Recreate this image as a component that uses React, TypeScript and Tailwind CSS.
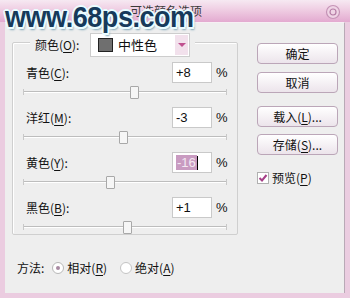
import React from 'react'

const cjk = "font-['Noto_Sans_CJK_SC','Noto_Sans',sans-serif]"

function Mn({ c }: { c: string }) {
  return <span className="underline underline-offset-2">{c}</span>
}

function Slider({ pos, last }: { pos: number; last?: boolean }) {
  return (
    <div className={`relative ml-[10px] w-[204px] ${last ? 'h-[16px]' : 'h-[24px]'}`}>
      <div className="absolute left-0 right-0 top-[8px] h-[2px] border-t border-[#bdbdbd] border-b-white border-b" />
      <div className="absolute left-0 top-[6px] h-[6px] w-[1px] bg-[#c8c8c8]" />
      <div className="absolute right-0 top-[6px] h-[6px] w-[1px] bg-[#c8c8c8]" />
      <div
        className="absolute top-[3px] h-[13px] w-[9px] border border-[#a8a8a8] bg-[#f6f6f6] rounded-[1px]"
        style={{ left: pos - 4 }}
      />
    </div>
  )
}

function Row({ label, m, value, selected }: { label: string; m: string; value: string; selected?: boolean }) {
  return (
    <div className="flex items-center h-[21px] pl-[13px]">
      <span className="w-[146px]">
        {label}(<Mn c={m} />):
      </span>
      <div className="w-[40px] h-[21px] bg-white border border-[#c9c9c9] flex items-center pl-[3px] font-['Liberation_Sans',sans-serif] text-[13px]">
        {selected ? (
          <>
            <span className="bg-[#c99bc1] text-[#f4e8f2] px-[1px] leading-[15px]">{value}</span>
            <span className="w-[1px] h-[14px] bg-black" />
          </>
        ) : (
          value
        )}
      </div>
      <span className="ml-[4px] font-['Liberation_Sans',sans-serif] text-[13px]">%</span>
    </div>
  )
}

function Btn({ children, mt }: { children: React.ReactNode; mt: string }) {
  return (
    <div
      className={`${mt} h-[21px] w-[81px] rounded-[4px] border border-[#bba6b8] bg-gradient-to-b from-white to-[#ece4eb] flex items-center justify-center`}
    >
      {children}
    </div>
  )
}

export default function App() {
  return (
    <div className={`relative w-[350px] h-[298px] overflow-hidden bg-[#ebcce0] flex flex-col text-[12px] text-[#111] ${cjk}`}>
      {/* title bar */}
      <div className="relative h-[22px] shrink-0 flex items-center bg-gradient-to-b from-[#f6e9f2] via-[#eecae1] to-[#e3aad0]">
        <span className="ml-[130px] text-[12px] text-[#3a3a3a]">可选颜色选项</span>
        <svg className="absolute left-[325px] top-[4px]" width="16" height="16" viewBox="0 0 16 16">
          <circle cx="8" cy="8" r="6.5" fill="#efd3e5" stroke="#c493b6" strokeWidth="1.2" />
          <circle cx="8" cy="8" r="3" fill="none" stroke="#b57ea6" strokeWidth="1.2" />
        </svg>
      </div>

      {/* body */}
      <div className="flex-1 mx-[5px] mb-[5px] bg-[#eeeeee] border-t border-[#f6f0f4] border-r border-r-[#b9a9b6] flex">
        <div className="pl-[7px] flex flex-col">
          <div className="mt-[19px] w-[226px] border border-[#cfcfcf] rounded-[2px] shadow-[inset_1px_1px_0_#fff] flex flex-col">
            <div className="-mt-[10px] ml-[17px] px-[5px] w-fit h-[24px] bg-[#eeeeee] flex items-center">
              <span className="w-[55px]">
                颜色(<Mn c="O" />):
              </span>
              <div className="w-[100px] h-[24px] bg-white border border-[#cdcdcd] flex items-center">
                <div className="ml-[7px] w-[15px] h-[14px] bg-[#6f6f6f] border border-[#222]" />
                <span className="ml-[5px] text-[13px]">中性色</span>
                <div className="ml-auto mr-[1px] w-[13px] h-[20px] bg-[#f2e1ec] flex items-center justify-center">
                  <div className="w-0 h-0 border-l-[4px] border-r-[4px] border-t-[4px] border-l-transparent border-r-transparent border-t-[#c0508f]" />
                </div>
              </div>
            </div>
            <div className="mt-[5px]">
              <Row label="青色" m="C" value="+8" />
              <Slider pos={111} />
              <Row label="洋红" m="M" value="-3" />
              <Slider pos={100} />
              <Row label="黄色" m="Y" value="-16" selected />
              <Slider pos={87} />
              <Row label="黑色" m="B" value="+1" />
              <Slider pos={104} last />
            </div>
          </div>

          <div className="mt-[24px] pl-[5px] h-[18px] flex items-center">
            <span>方法:</span>
            <div className="ml-[8px] w-[12px] h-[12px] rounded-full border border-[#b8b8b8] bg-white flex items-center justify-center">
              <div className="w-[4px] h-[4px] rounded-full bg-[#a88aa2]" />
            </div>
            <span className="ml-[3px]">
              相对(<Mn c="R" />)
            </span>
            <div className="ml-[13px] w-[12px] h-[12px] rounded-full border border-[#c4c4c4] bg-white" />
            <span className="ml-[3px]">
              绝对(<Mn c="A" />)
            </span>
          </div>
        </div>

        <div className="ml-[19px] flex flex-col">
          <Btn mt="mt-[20px]">确定</Btn>
          <Btn mt="mt-[8px]">取消</Btn>
          <Btn mt="mt-[13px]">
            载入(<Mn c="L" />)...
          </Btn>
          <Btn mt="mt-[7px]">
            存储(<Mn c="S" />)...
          </Btn>
          <div className="mt-[14px] flex items-center">
            <div className="w-[12px] h-[12px] border border-[#b0b0b0] bg-white flex items-center justify-center">
              <svg width="10" height="10" viewBox="0 0 10 10">
                <path d="M1.5 5 L4 7.5 L8.5 2" fill="none" stroke="#a63f88" strokeWidth="2" />
              </svg>
            </div>
            <span className="ml-[3px]">
              预览(<Mn c="P" />)
            </span>
          </div>
        </div>
      </div>

      {/* watermark */}
      <div className="absolute left-[5px] top-[2px] origin-left scale-x-[0.9] font-['Liberation_Sans',sans-serif] font-bold text-[30px] leading-none tracking-[-0.5px] text-[#163a5b] [text-shadow:1.5px_1.5px_0_#eafcff,-1.5px_-1.5px_0_#eafcff,1.5px_-1.5px_0_#eafcff,-1.5px_1.5px_0_#eafcff,0_2px_0_#eafcff,2px_0_0_#eafcff,-2px_0_0_#eafcff,0_-2px_0_#eafcff,2px_3px_2px_#7fa6b8]">
        www.68ps.com
      </div>
    </div>
  )
}
